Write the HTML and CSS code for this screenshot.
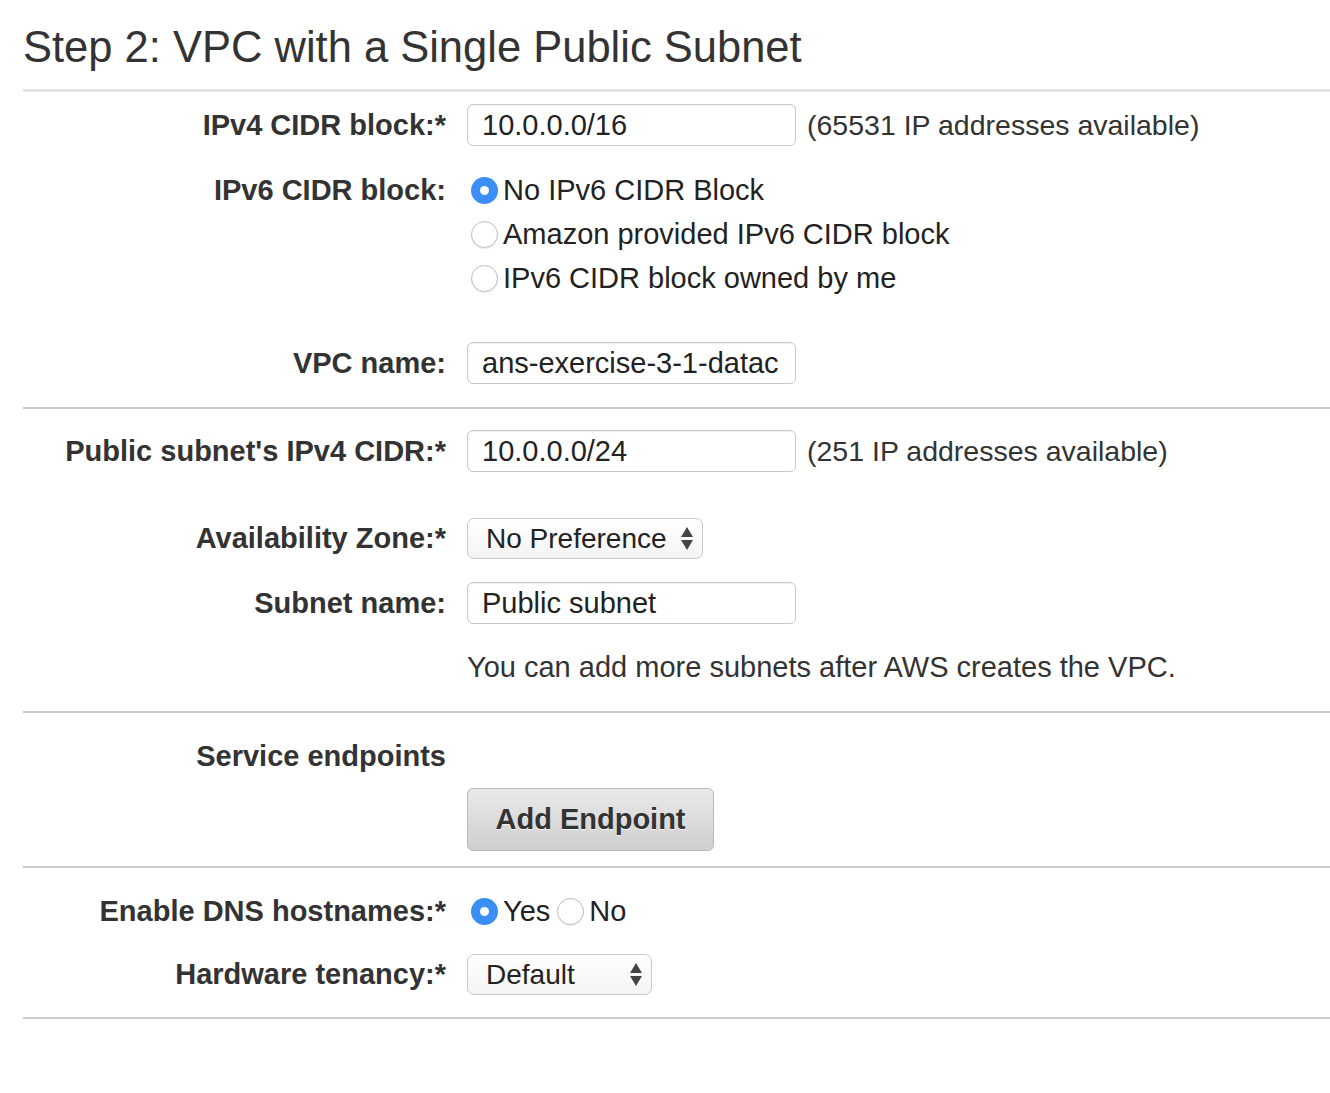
FILE: index.html
```html
<!DOCTYPE html>
<html>
<head>
<meta charset="utf-8">
<link rel="stylesheet" href="styles.css">
</head>
<body>
<div class="page">
  <h1 class="title">Step 2: VPC with a Single Public Subnet</h1>
  <div class="rule-thick"></div>

  <div class="row m12">
    <div class="label">IPv4 CIDR block:*</div>
    <div class="control">
      <div class="input">10.0.0.0/16</div>
      <span class="note">(65531 IP addresses available)</span>
    </div>
  </div>

  <div class="row row-top m22">
    <div class="label line">IPv6 CIDR block:</div>
    <div class="radios-col">
      <div class="radio-line"><span class="radio checked"></span><span class="rtext">No IPv6 CIDR Block</span></div>
      <div class="radio-line"><span class="radio"></span><span class="rtext">Amazon provided IPv6 CIDR block</span></div>
      <div class="radio-line"><span class="radio"></span><span class="rtext">IPv6 CIDR block owned by me</span></div>
    </div>
  </div>

  <div class="row m42">
    <div class="label">VPC name:</div>
    <div class="control">
      <div class="input">ans-exercise-3-1-datac</div>
    </div>
  </div>

  <div class="rule m23"></div>

  <div class="row m21">
    <div class="label">Public subnet's IPv4 CIDR:*</div>
    <div class="control">
      <div class="input">10.0.0.0/24</div>
      <span class="note">(251 IP addresses available)</span>
    </div>
  </div>

  <div class="row m46">
    <div class="label">Availability Zone:*</div>
    <div class="control">
      <div class="select sel-az"><span class="sel-text">No Preference</span><span class="arrows"><span class="up"></span><span class="down"></span></span></div>
    </div>
  </div>

  <div class="row m23">
    <div class="label">Subnet name:</div>
    <div class="control">
      <div class="input">Public subnet</div>
    </div>
  </div>

  <div class="row m21">
    <div class="label"></div>
    <div class="help">You can add more subnets after AWS creates the VPC.</div>
  </div>

  <div class="rule m22"></div>

  <div class="row m21">
    <div class="label line">Service endpoints</div>
    <div></div>
  </div>

  <div class="row m10">
    <div class="label"></div>
    <div class="control">
      <button class="btn">Add Endpoint</button>
    </div>
  </div>

  <div class="rule m15"></div>

  <div class="row m21">
    <div class="label line">Enable DNS hostnames:*</div>
    <div class="radio-inline">
      <span class="radio checked"></span><span class="rtext">Yes</span>
      <span class="radio r-no"></span><span class="rtext">No</span>
    </div>
  </div>

  <div class="row m21">
    <div class="label">Hardware tenancy:*</div>
    <div class="control">
      <div class="select sel-ten"><span class="sel-text">Default</span><span class="arrows"><span class="up"></span><span class="down"></span></span></div>
    </div>
  </div>

  <div class="rule m22"></div>
</div>
</body>
</html>
```

FILE: styles.css
```css
html, body {
  margin: 0;
  padding: 0;
  background: #ffffff;
}

body {
  font-family: "Liberation Sans", Arial, Helvetica, sans-serif;
  color: #222222;
  font-size: 29px;
}

.page {
  padding: 22px 0 0 23px;
}

.title {
  margin: 0;
  font-size: 43.5px;
  font-weight: normal;
  line-height: 50px;
  color: #333333;
}

.rule-thick {
  margin-top: 17px;
  height: 3px;
  background: #e4e4e4;
}

.rule {
  height: 2px;
  background: #cbcbcb;
}

.row {
  display: grid;
  grid-template-columns: 423px 1fr;
  column-gap: 21px;
  align-items: center;
}

.row-top {
  align-items: start;
}

.m10 { margin-top: 10px; }
.m12 { margin-top: 12px; }
.m15 { margin-top: 15px; }
.m21 { margin-top: 21px; }
.m22 { margin-top: 22px; }
.m23 { margin-top: 23px; }
.m42 { margin-top: 42px; }
.m46 { margin-top: 46px; }

.label {
  text-align: right;
  font-weight: bold;
  color: #333333;
  white-space: nowrap;
}

.label.line {
  line-height: 44px;
}

.control {
  display: flex;
  align-items: center;
}

.input {
  box-sizing: border-box;
  width: 329px;
  height: 42px;
  border: 1px solid #c9c9c9;
  border-radius: 6px;
  padding: 0 14px;
  line-height: 41px;
  color: #222222;
  background: #ffffff;
  box-shadow: inset 0 1px 1px rgba(0, 0, 0, 0.05);
  white-space: nowrap;
  overflow: hidden;
}

.note {
  margin-left: 11px;
  font-size: 28.5px;
  color: #333333;
  white-space: nowrap;
}

.help {
  line-height: 44px;
  color: #333333;
  white-space: nowrap;
}

.radios-col {
  display: flex;
  flex-direction: column;
}

.radio-line,
.radio-inline {
  display: flex;
  align-items: center;
  height: 44px;
  padding-left: 4px;
}

.radio {
  box-sizing: border-box;
  width: 27px;
  height: 27px;
  border-radius: 50%;
  border: 1px solid #bdbdbd;
  background: #ffffff;
  box-shadow: 0 1px 1px rgba(0, 0, 0, 0.08);
  flex: none;
  position: relative;
}

.radio.checked {
  border: none;
  background: #3a8ef6;
  box-shadow: none;
}

.radio.checked::after {
  content: "";
  position: absolute;
  left: 50%;
  top: 50%;
  width: 9px;
  height: 9px;
  margin: -4.5px 0 0 -4.5px;
  border-radius: 50%;
  background: #ffffff;
}

.rtext {
  margin-left: 5px;
  color: #222222;
  white-space: nowrap;
}

.r-no {
  margin-left: 7px;
}

.select {
  box-sizing: border-box;
  height: 41px;
  border: 1px solid #c9c9c9;
  border-radius: 7px;
  background: linear-gradient(#ffffff, #f4f4f4);
  display: flex;
  align-items: center;
  justify-content: space-between;
  padding: 0 9px 0 18px;
  font-size: 28px;
  color: #222222;
}

.sel-az {
  width: 236px;
}

.sel-ten {
  width: 185px;
}

.arrows {
  display: flex;
  flex-direction: column;
  align-items: center;
  gap: 3px;
}

.up {
  width: 0;
  height: 0;
  border-left: 6px solid transparent;
  border-right: 6px solid transparent;
  border-bottom: 10px solid #444444;
}

.down {
  width: 0;
  height: 0;
  border-left: 6px solid transparent;
  border-right: 6px solid transparent;
  border-top: 10px solid #444444;
}

.btn {
  box-sizing: border-box;
  width: 247px;
  height: 63px;
  border: 1px solid #b9b9b9;
  border-radius: 6px;
  background: linear-gradient(#e9e9e9, #cfcfcf);
  font-family: "Liberation Sans", Arial, Helvetica, sans-serif;
  font-size: 29px;
  font-weight: bold;
  color: #333333;
  text-shadow: 0 1px 0 rgba(255, 255, 255, 0.8);
  padding: 0;
}
```
